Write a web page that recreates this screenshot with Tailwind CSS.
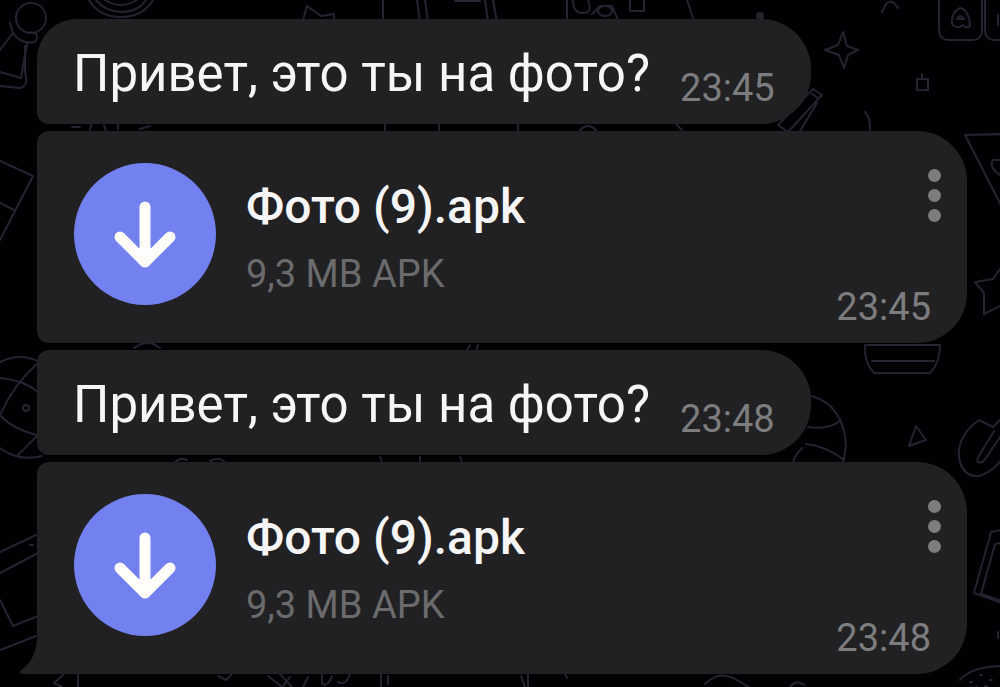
<!DOCTYPE html>
<html lang="ru">
<head>
  <meta charset="UTF-8" />
  <meta name="viewport" content="width=device-width, initial-scale=1.0" />
  <title>Чат</title>
  <script src="https://cdn.jsdelivr.net/npm/@tailwindcss/browser@4"></script>
</head>
<body class="relative min-h-screen overflow-hidden bg-[#010104] font-['Roboto',sans-serif] text-[#f6f6f6]">
  <!-- Wallpaper -->
  <svg class="absolute inset-0 w-full h-full" viewBox="0 0 1000 687" preserveAspectRatio="xMidYMid slice" fill="none" stroke="#242431" stroke-width="2" stroke-linecap="round" stroke-linejoin="round" aria-hidden="true">
    <!-- left edge -->
    <circle cx="31" cy="18" r="15" />
    <path d="M10 23l3 10q8 12 22 9q6-8-4-10M13 33L0 50M27 44l-6 34L0 72M25 46v26q4 14-5 16L0 86" />
    <path d="M0 161l33 15L0 240M0 203l14 7" />
    <path d="M0 362q20-10 40 0M0 378q24 2 38 14M37 364Q14 384 0 415q12 14 37 20M0 448q18 14 42 8M37 436L18 455" />
    <circle cx="26" cy="408" r="3" />
    <path d="M0 552l36-17M0 573l38-20M0 600l13 26 25-10M0 650l36-14M30 545l3 0" />
    <path d="M64 674l-10 9 8 4M78 674v13M218 676l8 4 6-6" />
    <!-- top edge -->
    <path d="M89 0q10 17 32 17T153 0M96 0q10 12 26 12T146 0M105 0q16 10 32 0" />
    <path d="M303 20l4-14 14 10 13-2v8M383 0v28M417 0l3 22M425 0l3 22M455 1h25M485 0l3 22M493 0l4 22M567 0v22M573 0q0 13 10 13t5-13M592 14l8-8h12l6 14M630 0v11h14V0M687 0l6 18" />
    <ellipse cx="605" cy="11" rx="7" ry="5" />
    <circle cx="760" cy="16" r="3" fill="#242431" />
    <path d="M882 12l4-8q6-6 12 4" />
    <!-- right edge -->
    <rect x="939" y="-20" width="43" height="60" rx="9" />
    <rect x="985" y="-20" width="43" height="60" rx="9" />
    <path d="M952 24q-1-12 8-16q9 2 10 18q-4 3-7-1q-4 4-9 1zM957 19q3-6 7 0zM998 15v10" />
    <path d="M843 32l4 14 11 4-10 5-4 13-5-13-14-5 13-5zM917 79h11v11h-11zM922 74v4M865 112q6 6 5 20" />
    <path d="M778 125l10 7 34-37-9-6zM800 131l17-28M818 98l-6-4" />
    <path d="M1005 134l-40 1 40 78M1005 160l-12 0q-5 8 9 16" />
    <path d="M1005 262l-12 17-18 3 9 11v21l20-10" />
    <path d="M865 345h75q0 18-10 28h-56q-10-10-9-28zM872 361h62" />
    <path d="M812 396q32 10 34 50l-3 18M808 427q20 3 32-6M806 444q20 2 38 16M802 448q-8 8-9 15" />
    <path d="M916 426l10 14-17 6zM979 420q-22 16-20 37q3 20 20 19q14-4 26-20M979 420l14 7 12-12M994 431l-14 23q-4 6-2 8q4 2 8-4l16-24" />
    <path d="M1005 529l-14 3-17 61 31 11M1005 542l-10 2-14 50 24 8M998 632v6" />
    <path d="M960 680q12-14 45-14M970 682l2 0M980 675l2 0M990 680l2 0M985 686l2 0M975 687l2 0" />
    <!-- between the messages -->
    <path d="M72 127h8M92 122l-2 8M104 125l2 6M118 124v5M140 129l10-3M385 124v8M439 124v6M518 124v7M580 130q8-8 16 0M676 124l6 6" />
    <path d="M134 348q14-10 26 0M470 345l-4 7M478 345l-2 7" />
    <path d="M175 462q6-5 12-2M210 461q8-4 14 0M380 457l2 5M420 457v5M460 457l2 5" />
    <!-- bottom edge -->
    <path d="M268 676l14 11 8-10M280 674l12 13M308 677l-5 10M322 674v10q6 3 10-8M338 682q8 4 12-8M381 674v13M388 676v8M521 676l4 11M528 674v13M565 674l2 4M705 684q14-14 30-5M735 679l14 8M790 687q6-8 14-2" />
  </svg>

  <!-- Messages -->
  <main class="relative flex flex-col items-start gap-[7px] pt-[19px] pl-[37px] pr-[33px]">
    <article class="flex items-end gap-[30px] rounded-l-xl rounded-tl-[40px] rounded-r-[50px] bg-[#212123] pt-[25px] pb-[14px] px-9">
      <p class="mb-[6px] text-[51px] leading-[60px]">Привет, это ты на фото?</p>
      <time class="text-[38px] leading-[44px] text-[#7d7d7f]">23:45</time>
    </article>

    <article class="flex w-full gap-[30px] rounded-l-xl rounded-r-[50px] bg-[#212123] pt-8 pb-[14px] pl-[37px] pr-[26px]">
      <button type="button" aria-label="Скачать" class="mb-6 size-[142px] shrink-0 rounded-full bg-[#7381f0]">
        <svg class="size-full" viewBox="0 0 142 142" fill="none" stroke="#fffefa" stroke-width="11" stroke-linecap="round" stroke-linejoin="round"><path d="M71 44v55M46 74l25 25 25-25" /></svg>
      </button>
      <div class="grow pt-[14px]">
        <h2 class="text-5xl leading-[60px] font-medium">Фото (9).apk</h2>
        <p class="mt-[15px] text-[38px] leading-[44px] text-[#6b6b6d]">9,3 MB APK</p>
      </div>
      <div class="flex flex-col items-end justify-between">
        <button type="button" aria-label="Меню" class="flex flex-col gap-[7px] pt-[6px]">
          <span class="size-[13px] rounded-full bg-[#7d7d7f]"></span>
          <span class="size-[13px] rounded-full bg-[#7d7d7f]"></span>
          <span class="size-[13px] rounded-full bg-[#7d7d7f]"></span>
        </button>
        <time class="mr-[10px] text-[38px] leading-[44px] text-[#7d7d7f]">23:45</time>
      </div>
    </article>

    <article class="flex items-end gap-[30px] rounded-l-xl rounded-r-[50px] bg-[#212123] pt-[25px] pb-[14px] px-9">
      <p class="mb-[6px] text-[51px] leading-[60px]">Привет, это ты на фото?</p>
      <time class="text-[38px] leading-[44px] text-[#7d7d7f]">23:48</time>
    </article>

    <article class="relative flex w-full gap-[30px] rounded-tl-xl rounded-r-[50px] bg-[#212123] pt-8 pb-[14px] pl-[37px] pr-[26px]">
      <!-- tail -->
      <svg class="absolute right-full bottom-0 w-[18px] h-[36px]" viewBox="0 0 18 36" fill="#212123" aria-hidden="true"><path d="M18 0q-1 22-16 32q-3 3 1 4h15z" /></svg>
      <button type="button" aria-label="Скачать" class="mb-6 size-[142px] shrink-0 rounded-full bg-[#7381f0]">
        <svg class="size-full" viewBox="0 0 142 142" fill="none" stroke="#fffefa" stroke-width="11" stroke-linecap="round" stroke-linejoin="round"><path d="M71 44v55M46 74l25 25 25-25" /></svg>
      </button>
      <div class="grow pt-[14px]">
        <h2 class="text-5xl leading-[60px] font-medium">Фото (9).apk</h2>
        <p class="mt-[15px] text-[38px] leading-[44px] text-[#6b6b6d]">9,3 MB APK</p>
      </div>
      <div class="flex flex-col items-end justify-between">
        <button type="button" aria-label="Меню" class="flex flex-col gap-[7px] pt-[6px]">
          <span class="size-[13px] rounded-full bg-[#7d7d7f]"></span>
          <span class="size-[13px] rounded-full bg-[#7d7d7f]"></span>
          <span class="size-[13px] rounded-full bg-[#7d7d7f]"></span>
        </button>
        <time class="mr-[10px] text-[38px] leading-[44px] text-[#7d7d7f]">23:48</time>
      </div>
    </article>
  </main>
</body>
</html>
